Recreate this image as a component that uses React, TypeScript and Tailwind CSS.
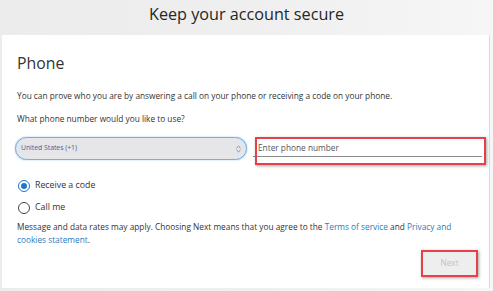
import React from "react";

export default function App() {
  const font = { fontFamily: '"Open Sans", "Noto Sans", sans-serif' };
  return (
    <div
      className="w-[493px] h-[291px] overflow-hidden bg-gradient-to-r from-[#ececec] via-[#efefef] to-[#f6f6f6] text-[#333]"
      style={font}
    >
      <div className="h-[35px] flex items-start justify-center pt-[2px]">
        <h1 className="text-[16.2px] leading-[24px] text-[#262626]">Keep your account secure</h1>
      </div>
      <div className="ml-[2px] w-[488px] h-[253px] bg-white border-r border-[#dedede] px-[13px] pt-[16px]">
        <h2 className="pl-[2px] text-[15.8px] leading-[24px] text-[#333]">Phone</h2>
        <p className="pl-[2px] mt-[15px] text-[8.3px] leading-[12px] text-[#333]">
          You can prove who you are by answering a call on your phone or receiving a code on your phone.
        </p>
        <p className="pl-[2px] mt-[11px] text-[8.3px] leading-[12px] text-[#333]">
          What phone number would you like to use?
        </p>
        <div className="mt-[12px] flex items-start">
          <div className="shrink-0 w-[232px] h-[23px] rounded-full border-[1.5px] border-[#6cb0ec] bg-[#e6e6e9] shadow-[0_0_2px_#9cc8f0] flex items-center justify-between pl-[5px] pr-[4px]">
            <span className="text-[6.8px] text-[#3a5fa3]">United States (+1)</span>
            <svg width="7" height="8" viewBox="0 0 7 8" className="text-[#7c8aa6]">
              <path d="M1.5 3 L3.5 1.2 L5.5 3" fill="none" stroke="currentColor" strokeWidth="1" />
              <path d="M1.5 5 L3.5 6.8 L5.5 5" fill="none" stroke="currentColor" strokeWidth="1" />
            </svg>
          </div>
          <div className="relative shrink-0 w-[233px] h-[28px] ml-[6px]">
            <div className="mt-[1px] w-[229px] h-[19px] border-b border-[#8a8a8a] flex items-end pl-[5px] pb-[2px]">
              <span className="text-[8.3px] leading-[12px] text-[#555]">Enter phone number</span>
            </div>
            <div className="absolute left-[2px] top-0 w-[231px] h-[28px] border-2 border-[#e8404a] shadow-[1px_1px_3px_rgba(0,0,0,0.35)]"></div>
          </div>
        </div>
        <div className="mt-[10px] flex flex-col">
          <label className="h-[22px] flex items-center gap-[5px] pl-[3px]">
            <span className="w-[12px] h-[12px] rounded-full border border-[#1f75c9] flex items-center justify-center">
              <span className="w-[6px] h-[6px] rounded-full bg-[#1f75c9]"></span>
            </span>
            <span className="text-[8.8px] text-[#333]">Receive a code</span>
          </label>
          <label className="h-[22px] flex items-center gap-[5px] pl-[3px]">
            <span className="w-[12px] h-[12px] rounded-full border border-[#444]"></span>
            <span className="text-[8.8px] text-[#333]">Call me</span>
          </label>
        </div>
        <p className="pl-[2px] mt-[1px] text-[8.3px] leading-[13px] text-[#333]">
          Message and data rates may apply. Choosing Next means that you agree to the{" "}
          <span className="text-[#2b7bbd]">Terms of service</span> and{" "}
          <span className="text-[#2b7bbd]">Privacy and</span>{" "}
          <span className="text-[#2b7bbd]">cookies statement</span>.
        </p>
        <div className="mt-[4px] flex justify-end -mr-[2px]">
          <div className="relative w-[57px] h-[27px]">
            <div className="absolute inset-[2px] bg-[#eeeeee] flex items-center justify-center">
              <span className="text-[8.3px] text-[#c2c2c2]">Next</span>
            </div>
            <div className="absolute inset-0 border-2 border-[#e8404a] shadow-[1px_1px_3px_rgba(0,0,0,0.35)]"></div>
          </div>
        </div>
      </div>
    </div>
  );
}
